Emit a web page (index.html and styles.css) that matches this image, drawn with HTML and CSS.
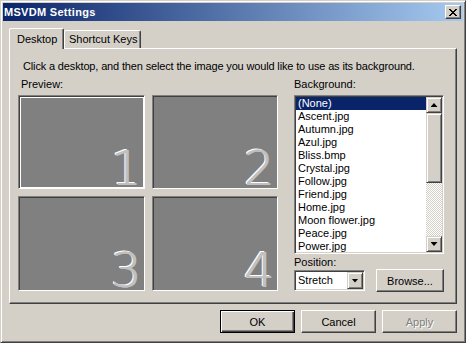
FILE: index.html
```html
<!DOCTYPE html>
<html>
<head>
<meta charset="utf-8">
<link rel="stylesheet" href="styles.css">
</head>
<body>
<div class="window">
  <div class="titlebar">
    <span class="title">MSVDM Settings</span>
    <button class="close" aria-label="Close">
      <svg width="8" height="7" viewBox="0 0 8 7" shape-rendering="crispEdges">
        <path d="M0 0h2v1H0zM6 0h2v1H6zM1 1h2v1H1zM5 1h2v1H5zM2 2h4v1H2zM3 3h2v1H3zM2 4h4v1H2zM1 5h2v1H1zM5 5h2v1H5zM0 6h2v1H0zM6 6h2v1H6z" fill="#000"/>
      </svg>
    </button>
  </div>
  <div class="body">
    <div class="tabs">
      <div class="tab active">Desktop</div>
      <div class="tab">Shortcut Keys</div>
    </div>
    <div class="panel">
      <p class="hint">Click a desktop, and then select the image you would like to use as its background.</p>
      <div class="cols">
        <div class="preview-col">
          <div class="label indent">Preview:</div>
          <div class="grid">
            <div class="desk selected"><span class="num">1</span></div>
            <div class="desk"><span class="num">2</span></div>
            <div class="desk"><span class="num">3</span></div>
            <div class="desk"><span class="num">4</span></div>
          </div>
        </div>
        <div class="bg-col">
          <div class="label">Background:</div>
          <div class="listbox">
            <ul class="items">
              <li class="sel">(None)</li>
              <li>Ascent.jpg</li>
              <li>Autumn.jpg</li>
              <li>Azul.jpg</li>
              <li>Bliss.bmp</li>
              <li>Crystal.jpg</li>
              <li>Follow.jpg</li>
              <li>Friend.jpg</li>
              <li>Home.jpg</li>
              <li>Moon flower.jpg</li>
              <li>Peace.jpg</li>
              <li>Power.jpg</li>
            </ul>
            <div class="scrollbar">
              <div class="sbtn"><span class="arrow up"></span></div>
              <div class="thumb"></div>
              <div class="track"></div>
              <div class="sbtn"><span class="arrow down"></span></div>
            </div>
          </div>
          <div class="label pos-label">Position:</div>
          <div class="pos-row">
            <div class="combo">
              <span class="combo-text">Stretch</span>
              <div class="sbtn combo-btn"><span class="arrow down"></span></div>
            </div>
            <button class="btn browse">Browse...</button>
          </div>
        </div>
      </div>
    </div>
    <div class="actions">
      <button class="btn default">OK</button>
      <button class="btn">Cancel</button>
      <button class="btn disabled">Apply</button>
    </div>
  </div>
</div>
</body>
</html>
```

FILE: styles.css
```css
html, body {
  margin: 0;
  padding: 0;
  background: #d4d0c8;
}

body {
  font-family: "Liberation Sans", Arial, sans-serif;
  font-size: 11px;
  color: #000;
}

.window {
  width: 466px;
  height: 343px;
  box-sizing: border-box;
  background: #d4d0c8;
  border: 1px solid;
  border-color: #d4d0c8 #404040 #404040 #d4d0c8;
  box-shadow: inset 1px 1px #fff, inset -1px -1px #808080;
  padding: 2px;
}

.titlebar {
  height: 18px;
  display: flex;
  align-items: center;
  justify-content: space-between;
  background: linear-gradient(to right, #0a246a, #a6caf0);
  padding-left: 1px;
}

.title {
  color: #fff;
  font-weight: bold;
  font-size: 11px;
  letter-spacing: 0.3px;
}

.close {
  width: 16px;
  height: 14px;
  margin-right: 2px;
  padding: 0;
  box-sizing: border-box;
  background: #d4d0c8;
  border: 1px solid;
  border-color: #fff #404040 #404040 #fff;
  box-shadow: inset -1px -1px #808080;
  display: flex;
  align-items: center;
  justify-content: center;
}

.close svg {
  display: block;
}

.body {
  padding: 7px 6px 0 6px;
}

.tabs {
  display: flex;
  align-items: flex-end;
  height: 20px;
}

.tab {
  box-sizing: border-box;
  height: 18px;
  border-top: 1px solid #fff;
  border-left: 1px solid #fff;
  border-right: 1px solid #404040;
  box-shadow: inset -1px 0 #808080;
  border-radius: 2px 2px 0 0;
  background: #d4d0c8;
  line-height: 17px;
  padding-left: 4px;
  width: 77px;
}

.tab.active {
  width: 55px;
  height: 21px;
  margin-bottom: -1px;
  position: relative;
  z-index: 1;
  padding-left: 7px;
  line-height: 20px;
}

.panel {
  box-sizing: border-box;
  height: 256px;
  border: 1px solid;
  border-color: #fff #404040 #404040 #fff;
  box-shadow: inset -1px -1px #808080;
  padding: 11px 10px 0 8px;
}

.hint {
  margin: 0 0 5px 5px;
  line-height: 13px;
  white-space: nowrap;
  letter-spacing: -0.15px;
}

.cols {
  display: flex;
  gap: 16px;
}

.preview-col {
  width: 260px;
}

.bg-col {
  width: 150px;
}

.label {
  line-height: 13px;
  height: 13px;
  margin-bottom: 4px;
}

.label.indent {
  padding-left: 3px;
}

.grid {
  display: grid;
  grid-template-columns: 127px 126px;
  grid-template-rows: 94px 95px;
  gap: 7px;
}

.desk {
  box-sizing: border-box;
  background: #808080;
  border: 1px solid;
  border-color: #808080 #fff #fff #808080;
  box-shadow: inset 1px 1px #404040;
  display: flex;
  justify-content: flex-end;
  align-items: flex-end;
  padding: 0 3px 0 0;
}

.desk.selected {
  box-shadow: inset 1px 1px #404040, inset 2px 2px #fff, inset -1px -1px #fff;
}

.num {
  display: block;
  font-family: "DejaVu Sans", sans-serif;
  font-weight: 200;
  font-size: 48px;
  line-height: 40px;
  height: 40px;
  color: #c0c0c0;
  text-shadow: 1px 0 0 #c0c0c0, -1px -1px 0 #fff;
}

.listbox {
  box-sizing: border-box;
  width: 150px;
  height: 159px;
  background: #fff;
  border: 1px solid;
  border-color: #808080 #fff #fff #808080;
  box-shadow: inset 1px 1px #404040, inset -1px -1px #d4d0c8;
  padding: 1px;
  display: flex;
}

.items {
  flex: 1;
  list-style: none;
  margin: 0;
  padding: 0;
  overflow: hidden;
}

.items li {
  height: 13px;
  line-height: 13px;
  padding-left: 2px;
  white-space: nowrap;
}

.items li.sel {
  background: #0a246a;
  color: #fff;
}

.scrollbar {
  width: 16px;
  display: flex;
  flex-direction: column;
}

.sbtn, .thumb {
  box-sizing: border-box;
  background: #d4d0c8;
  border: 1px solid;
  border-color: #d4d0c8 #404040 #404040 #d4d0c8;
  box-shadow: inset 1px 1px #fff, inset -1px -1px #808080;
}

.sbtn {
  height: 16px;
  display: flex;
  align-items: center;
  justify-content: center;
}

.thumb {
  height: 70px;
}

.track {
  flex: 1;
  background-color: #fff;
  background-image: repeating-conic-gradient(#d4d0c8 0 25%, #fff 0 50%);
  background-size: 2px 2px;
}

.arrow {
  display: block;
  width: 7px;
  height: 4px;
  background: #000;
}

.arrow.up {
  clip-path: polygon(50% 0, 100% 100%, 0 100%);
}

.arrow.down {
  clip-path: polygon(0 0, 100% 0, 50% 100%);
}

.pos-label {
  margin-top: 2px;
  margin-bottom: 0;
}

.pos-row {
  display: flex;
  justify-content: space-between;
  align-items: center;
  height: 23px;
}

.combo {
  box-sizing: border-box;
  width: 71px;
  height: 21px;
  background: #fff;
  border: 1px solid;
  border-color: #808080 #fff #fff #808080;
  box-shadow: inset 1px 1px #404040, inset -1px -1px #d4d0c8;
  padding: 1px;
  display: flex;
  align-items: stretch;
}

.combo-text {
  flex: 1;
  padding-left: 2px;
  line-height: 17px;
}

.combo-btn {
  width: 16px;
  height: 17px;
}

.btn {
  box-sizing: border-box;
  width: 75px;
  height: 23px;
  padding: 0;
  font-family: "Liberation Sans", Arial, sans-serif;
  font-size: 11px;
  color: #000;
  background: #d4d0c8;
  border: 1px solid;
  border-color: #fff #404040 #404040 #fff;
  box-shadow: inset -1px -1px #808080;
}

.btn.browse {
  width: 68px;
}

.btn.default {
  border: 1px solid #000;
  box-shadow: inset 1px 1px #fff, inset -1px -1px #404040, inset -2px -2px #808080;
}

.btn.disabled {
  color: #808080;
  text-shadow: 1px 1px 0 #fff;
}

.actions {
  display: flex;
  justify-content: flex-end;
  gap: 6px;
  margin-top: 6px;
}
```
